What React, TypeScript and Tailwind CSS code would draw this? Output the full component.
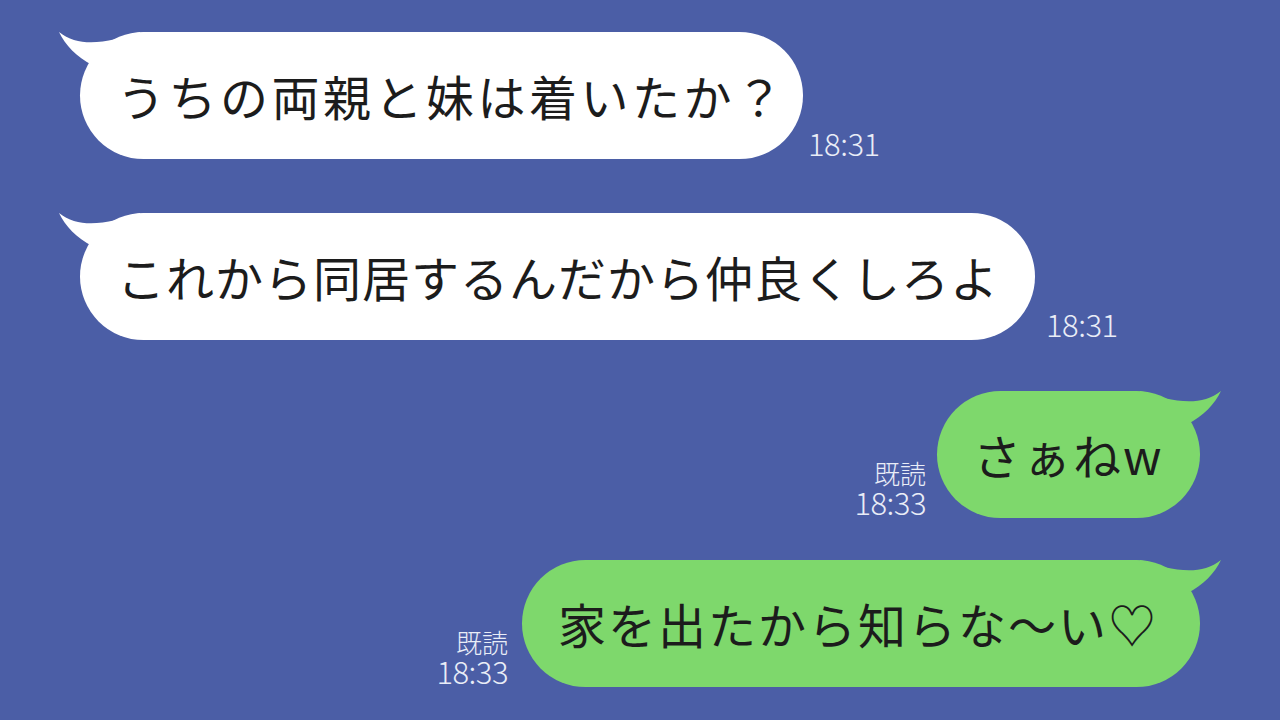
const jp = '"Noto Sans CJK JP", "Noto Sans", sans-serif';

type Side = 'left' | 'right';

function Tail({ side, color }: { side: Side; color: string }) {
  // little hooked tail on the top corner of a bubble
  return (
    <svg
      width="90"
      height="40"
      viewBox="0 0 90 40"
      className={
        side === 'left'
          ? 'absolute left-[-22px] top-0'
          : 'absolute right-[-22px] top-0 -scale-x-100'
      }
    >
      <path d="M1 0 C7 13 19 25 34 33 L82 33 L82 0 C52 10 22 17 1 0 Z" fill={color} />
    </svg>
  );
}

function Bubble({
  side,
  text,
  width,
  tracking = 'tracking-[1px]',
}: {
  side: Side;
  text: string;
  width: string;
  tracking?: string;
}) {
  const color = side === 'left' ? '#ffffff' : '#7ed86c';
  return (
    <div
      className={`relative h-[127px] ${width} rounded-full flex items-center ${
        side === 'left' ? 'bg-white pl-[37px]' : 'bg-[#7ed86c] pl-[36px]'
      }`}
    >
      <Tail side={side} color={color} />
      <span
        className={`relative -mt-[2px] text-[48px] leading-none text-[#1c1c1c] whitespace-nowrap ${tracking}`}
        style={{ fontFamily: jp }}
      >
        {text}
      </span>
    </div>
  );
}

function Time({ value }: { value: string }) {
  return (
    <span
      className="block text-[31px] leading-none font-light text-[#e9edf7] tracking-[-0.5px]"
      style={{ fontFamily: jp }}
    >
      {value}
    </span>
  );
}

function ReadMeta({ time }: { time: string }) {
  return (
    <div className="flex flex-col items-end mb-[1px]" style={{ fontFamily: jp }}>
      <span className="block text-[26px] leading-none font-light text-[#e9edf7]">既読</span>
      <Time value={time} />
    </div>
  );
}

export default function App() {
  return (
    <div className="w-[1280px] h-[720px] bg-[#4b5ea6] overflow-hidden flex flex-col">
      <div className="mt-[32px] pl-[80px] flex items-end gap-[5px]">
        <Bubble side="left" width="w-[723px]" text="うちの両親と妹は着いたか？" tracking="tracking-[3.5px]" />
        <div className="mb-[1px]">
          <Time value="18:31" />
        </div>
      </div>

      <div className="mt-[54px] pl-[80px] flex items-end gap-[11px]">
        <Bubble side="left" width="w-[955px]" text="これから同居するんだから仲良くしろよ" />
        <div className="mb-[1px]">
          <Time value="18:31" />
        </div>
      </div>

      <div className="mt-[51px] pr-[80px] flex items-end justify-end gap-[11px]">
        <ReadMeta time="18:33" />
        <Bubble side="right" width="w-[263px]" text="さぁねw" tracking="tracking-[2px]" />
      </div>

      <div className="mt-[42px] pr-[80px] flex items-end justify-end gap-[14px]">
        <ReadMeta time="18:33" />
        <Bubble side="right" width="w-[678px]" text="家を出たから知らな〜い♡" tracking="tracking-[2px]" />
      </div>
    </div>
  );
}
